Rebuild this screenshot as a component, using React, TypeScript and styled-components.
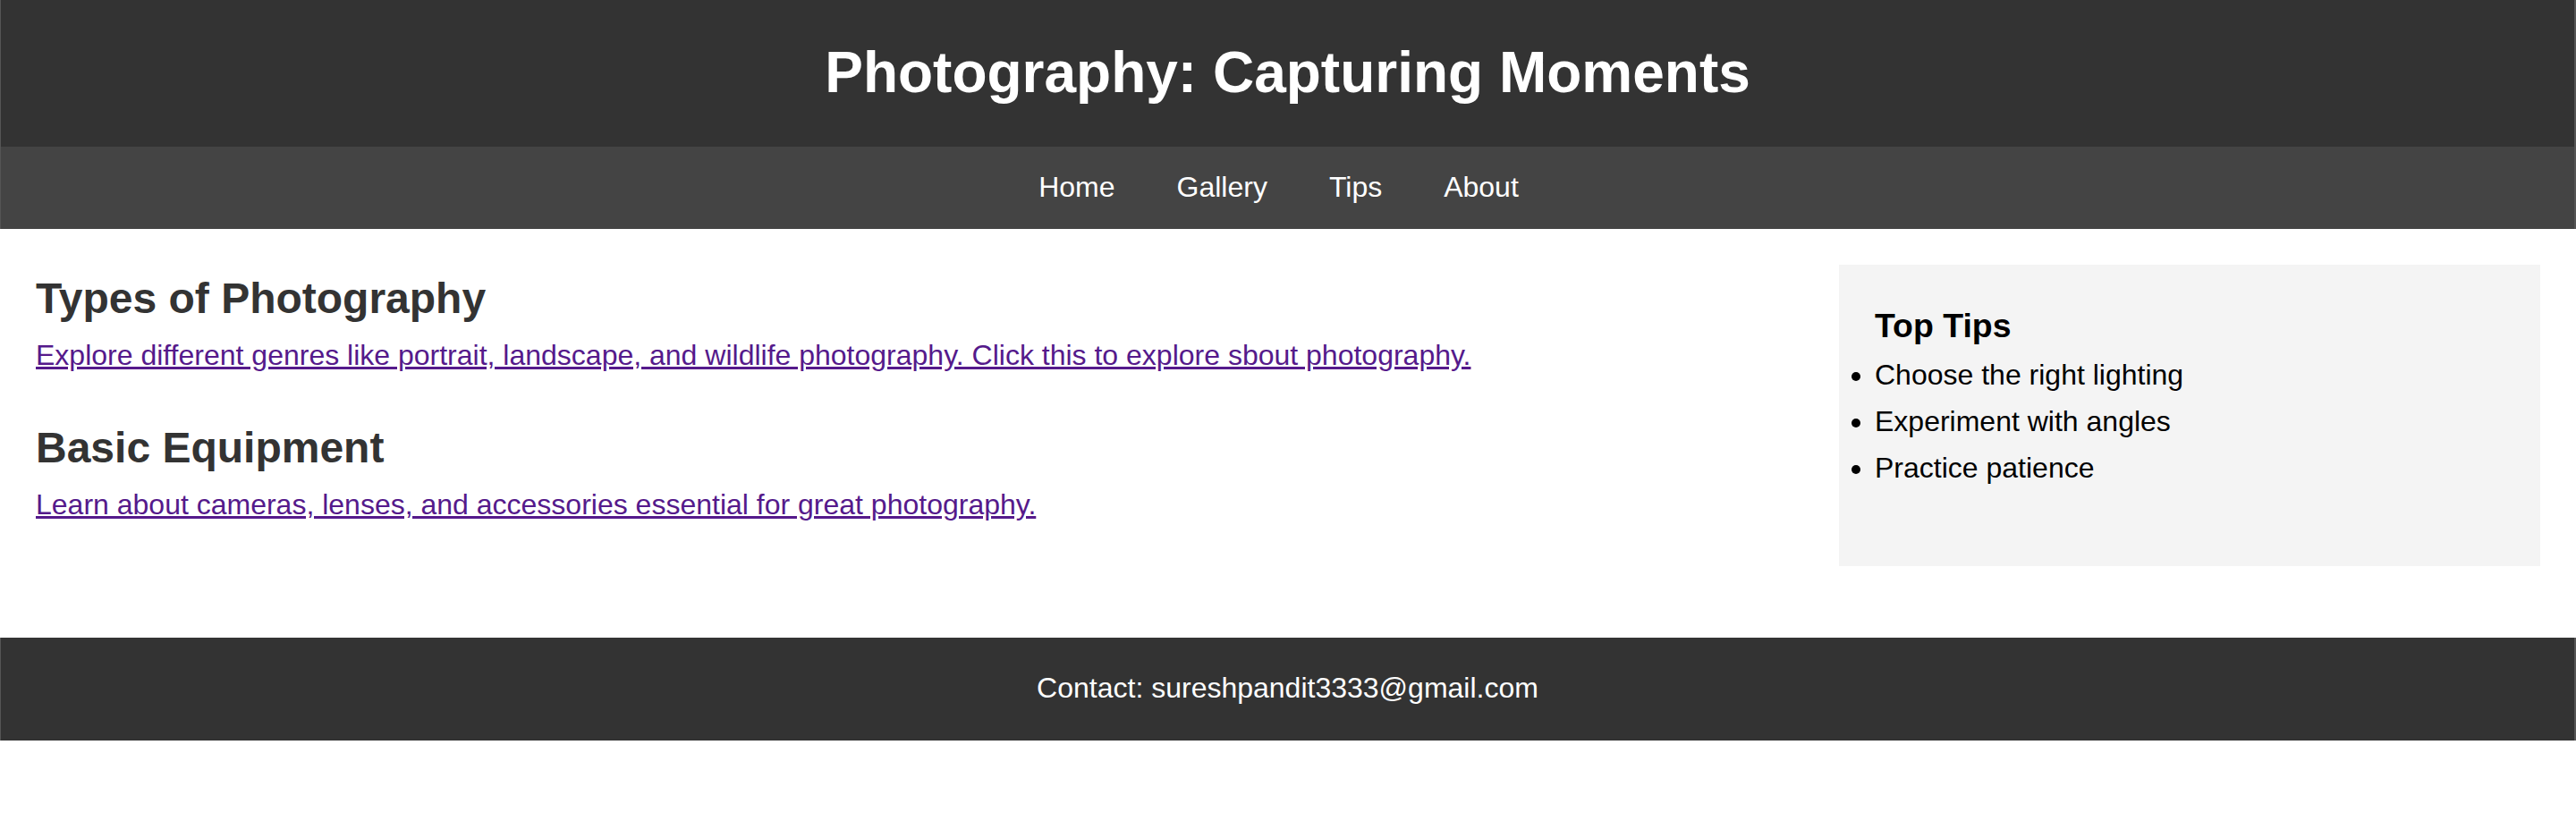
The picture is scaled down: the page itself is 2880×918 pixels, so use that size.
import React from "react";
import styled, { createGlobalStyle } from "styled-components";

const GlobalStyle = createGlobalStyle`
  html, body {
    margin: 0;
    padding: 0;
    background: #ffffff;
  }
  body {
    font-family: "Liberation Sans", Arial, Helvetica, sans-serif;
    color: #000000;
  }
  * { box-sizing: border-box; }
`;

const Header = styled.header`
  background: #333333;
  color: #ffffff;
  text-align: center;
  padding: 44px 0 46px;
  border-left: 1px solid #555555;
  border-right: 2px solid #555555;
`;

const Title = styled.h1`
  margin: 0;
  font-size: 64px;
  font-weight: 700;
  line-height: normal;
`;

const Nav = styled.nav`
  background: #444444;
  padding: 27px 20px 28px 0;
  border-left: 1px solid #555555;
  border-right: 2px solid #555555;
`;

const NavList = styled.ul`
  list-style: none;
  margin: 0;
  padding: 0;
  display: flex;
  justify-content: center;
  gap: 69px;
`;

const NavLink = styled.a`
  color: #ffffff;
  text-decoration: none;
  font-size: 32px;
  line-height: normal;
`;

const Main = styled.main`
  display: flex;
  align-items: flex-start;
  gap: 40px;
  padding: 40px;
`;

const Content = styled.div`
  flex: 1;
  min-width: 0;
`;

const Section = styled.section`
  margin-bottom: 57px;
  &:last-child { margin-bottom: 0; }
`;

const SectionTitle = styled.h2`
  margin: 10px 0 18px;
  font-size: 48px;
  font-weight: 700;
  color: #333333;
  line-height: normal;
`;

const SectionLink = styled.a`
  display: block;
  font-size: 32px;
  line-height: normal;
  color: #551a8b;
  text-decoration: underline;
`;

const Sidebar = styled.aside`
  width: 784px;
  flex: 0 0 784px;
  background: #f4f4f4;
  padding: 47px 40px 91px;
`;

const SidebarTitle = styled.h3`
  margin: 0 0 15px;
  font-size: 37.44px;
  font-weight: 700;
  line-height: normal;
  color: #000000;
`;

const TipList = styled.ul`
  margin: 0;
  padding: 0;
  list-style: disc outside;
  display: flex;
  flex-direction: column;
  gap: 15px;
`;

const Tip = styled.li`
  font-size: 32px;
  line-height: normal;
  display: list-item;
`;

const Footer = styled.footer`
  margin-top: 40px;
  background: #333333;
  color: #ffffff;
  text-align: center;
  padding: 38px 0 40px;
  font-size: 32px;
  line-height: normal;
  border-left: 1px solid #555555;
  border-right: 2px solid #555555;
`;

const navItems = ["Home", "Gallery", "Tips", "About"];
const tips = ["Choose the right lighting", "Experiment with angles", "Practice patience"];

export default function App() {
  return (
    <>
      <GlobalStyle />
      <Header>
        <Title>Photography: Capturing Moments</Title>
      </Header>
      <Nav>
        <NavList>
          {navItems.map((item) => (
            <li key={item}>
              <NavLink href="#">{item}</NavLink>
            </li>
          ))}
        </NavList>
      </Nav>
      <Main>
        <Content>
          <Section>
            <SectionTitle>Types of Photography</SectionTitle>
            <SectionLink href="#">
              Explore different genres like portrait, landscape, and wildlife photography. Click this to explore sbout photography.
            </SectionLink>
          </Section>
          <Section>
            <SectionTitle>Basic Equipment</SectionTitle>
            <SectionLink href="#">
              Learn about cameras, lenses, and accessories essential for great photography.
            </SectionLink>
          </Section>
        </Content>
        <Sidebar>
          <SidebarTitle>Top Tips</SidebarTitle>
          <TipList>
            {tips.map((t) => (
              <Tip key={t}>{t}</Tip>
            ))}
          </TipList>
        </Sidebar>
      </Main>
      <Footer>Contact: sureshpandit3333@gmail.com</Footer>
    </>
  );
}
